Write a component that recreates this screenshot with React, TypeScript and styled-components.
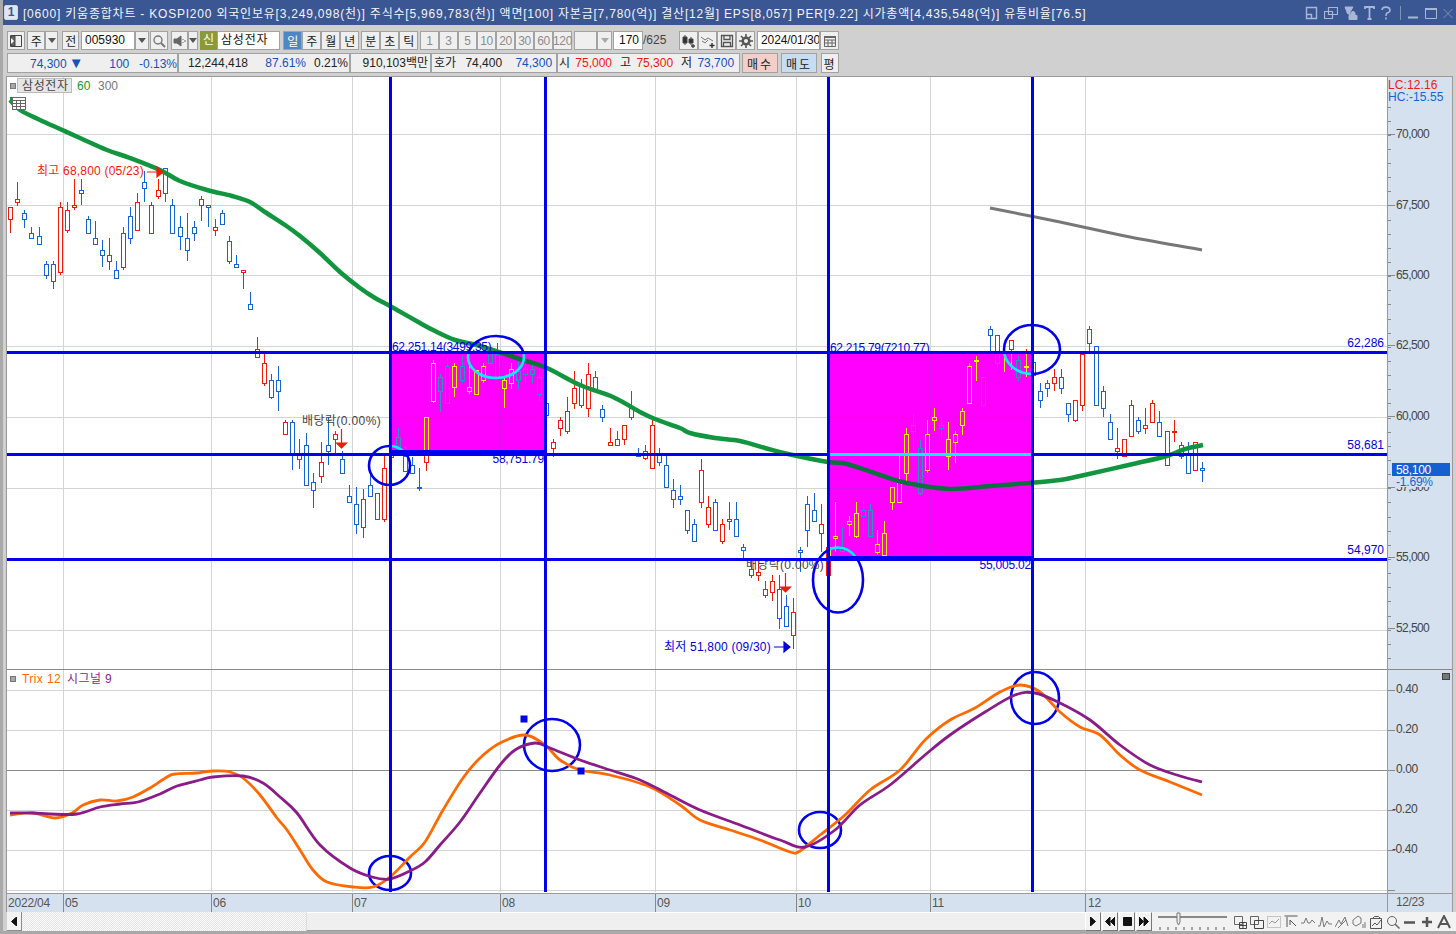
import React from "react";
import styled, { createGlobalStyle } from "styled-components";

const FONT = `"Liberation Sans", "Noto Sans CJK KR", sans-serif`;

const GlobalStyle = createGlobalStyle`
  html, body { margin: 0; padding: 0; background: #d0d0d0; overflow: hidden; }
  * { box-sizing: border-box; }
`;

// candle rows: [isRed, high, bodyTop, bodyBottom, low] in screen pixels
const candles: number[][] = [
  [1,207,207,219,233],[1,182,199,202,206],[0,210,213,219,228],[0,227,233,238,238],[0,227,236,244,244],
  [0,261,264,275,279],[0,261,264,281,289],[1,202,207,272,275],[1,202,210,230,233],[1,179,205,207,210],
  [0,179,190,193,205],[0,216,219,233,233],[0,221,238,244,244],[0,240,250,255,267],[1,238,255,261,270],
  [0,261,270,278,278],[1,227,233,267,270],[0,207,216,238,244],[1,193,202,230,230],[0,171,182,188,202],
  [1,202,205,233,233],[1,179,190,196,199],[0,168,168,193,202],[0,199,205,233,233],[0,216,227,236,250],
  [0,213,238,250,261],[0,221,227,233,241],[1,196,199,205,221],[0,205,205,207,227],[1,219,227,230,236],
  [0,210,213,224,224],[0,236,241,261,264],[0,255,264,267,267],[1,270,270,272,289],[0,292,304,309,309],
  [0,337,349,357,357],[1,352,363,383,386],[0,374,380,397,399],[0,366,380,391,411],[1,420,422,434,434],
  [0,420,422,453,470],[0,439,454,459,469],[0,433,445,485,485],[0,473,482,490,508],[1,442,462,476,483],
  [0,417,445,451,465],[1,431,434,439,453],[0,451,459,473,473],[0,485,496,502,502],[0,487,504,524,534],
  [1,489,499,527,538],[0,473,485,496,496],[0,493,493,519,519],[1,456,468,519,522],[1,451,453,457,457],
  [0,428,437,448,452],[0,446,456,471,471],[0,457,465,473,473],[0,468,487,488,491],[1,417,417,462,471],
  [1,360,363,401,403],[0,374,377,391,412],[0,357,366,403,403],[1,363,366,387,397],[0,355,366,380,383],
  [1,363,387,391,394],[1,370,370,394,394],[1,363,366,380,383],[0,350,353,363,363],[0,343,354,378,379],
  [1,378,380,388,408],[1,363,369,383,389],[0,358,371,380,389],[0,363,369,374,383],[0,363,369,374,383],
  [0,369,377,394,401],[0,395,403,415,418],[1,439,442,448,457],[1,417,420,428,436],[1,397,411,431,434],
  [1,371,388,403,409],[0,379,386,405,408],[1,363,374,408,417],[0,371,377,391,391],[0,405,409,417,422],
  [1,428,442,445,445],[0,431,439,445,445],[1,425,425,439,445],[0,391,408,417,420],[0,448,453,456,456],
  [1,445,451,458,460],[1,419,425,468,468],[0,448,454,462,466],[0,454,465,487,487],[0,479,490,499,508],
  [0,485,496,499,505],[0,510,510,530,534],[0,519,524,541,541],[1,459,470,502,508],[1,496,507,524,528],
  [0,499,502,530,530],[1,519,524,541,544],[1,502,519,521,530],[0,502,519,536,536],[0,544,547,550,559],
  [0,559,569,575,578],[1,559,572,575,581],[1,581,589,595,598],[1,575,581,592,601],[0,575,589,618,629],
  [0,595,606,626,626],[1,598,612,635,649],[0,547,550,552,572],[0,496,504,530,547],[0,493,510,521,521],
  [1,504,524,533,552],[1,547,547,575,575],[1,502,536,538,552],[0,527,547,551,552],[1,516,521,524,536],
  [1,502,513,536,538],[0,499,510,516,536],[0,504,510,536,536],[1,530,544,552,555],[1,521,533,555,555],
  [1,487,487,502,510],[1,455,482,502,502],[1,428,434,473,482],[0,414,425,431,449],[0,440,448,493,495],
  [1,420,434,470,473],[1,408,417,420,431],[0,417,425,428,437],[1,422,439,456,470],[1,431,434,442,463],
  [1,408,411,425,435],[1,363,366,403,403],[1,356,360,361,381],[0,377,377,405,405],[0,326,329,335,352],
  [0,335,335,363,369],[1,345,351,353,372],[1,340,340,349,370],[0,355,360,377,381],[1,349,366,367,377],
  [0,360,362,375,380],[0,383,391,400,408],[0,380,383,388,397],[1,369,377,383,391],[0,369,377,388,394],
  [0,403,403,414,422],[1,400,400,420,422],[1,354,354,405,411],[0,326,329,343,351],[0,346,346,405,405],
  [0,386,391,408,417],[0,414,422,439,439],[1,428,448,451,459],[1,439,439,456,456],[1,400,405,436,436],
  [0,417,420,431,434],[1,408,425,428,434],[1,400,403,422,422],[0,411,422,436,436],[1,431,431,465,465],
  [1,420,431,432,442],[0,442,445,456,459],[0,442,454,473,473],[1,442,442,470,470],[0,462,468,470,482],
];

const ma60 = "10,100 20,110 40,120 60,129 80,138 107,150 130,158 160,170 180,181 207,190 232,196 250,202 265,212 285,225 300,236 320,253 340,272 360,288 375,298 390,306 420,323 433,330 455,340 480,346 523,360 547,368 580,385 613,397 640,412 655,419 680,428 690,433 715,438 740,441 765,448 788,454 828,462 847,464 880,475 907,483 950,489 990,486 1030,483 1060,480 1080,476 1133,464 1167,456 1185,449 1203,445";
const gray = "990,208 1060,222 1130,237 1202,250";
const trix = "10,815 33,813 55,818 72,813 83,805 100,800 117,801 133,797 150,788 167,777 175,774 197,773 213,771 230,772 243,778 260,795 277,818 287,830 300,850 313,870 327,882 353,887 373,887 390,877 410,857 425,842 443,810 463,778 480,758 500,743 525,735 545,745 560,760 580,770 610,775 650,787 680,805 700,820 730,830 760,840 790,852 800,851 820,835 845,815 870,790 900,770 925,740 950,720 975,708 1000,692 1020,685 1040,692 1060,712 1080,727 1100,735 1120,755 1140,770 1170,782 1202,795";
const signal = "10,813 33,813 50,814 77,814 100,807 120,804 138,802 160,794 177,786 200,780 213,777 243,776 263,783 280,797 297,813 320,845 350,868 372,877 390,879 410,871 425,862 440,845 460,822 480,793 500,765 515,750 535,743 550,748 580,760 610,770 640,780 670,795 700,810 740,825 780,840 805,847 835,830 860,805 890,785 925,755 950,735 985,712 1015,695 1035,693 1060,703 1090,720 1120,745 1150,765 1180,776 1202,782";

// catmull-rom through the read-off points so the curves don't look like straight pieces
const smooth = (points: string) => {
  const p = points.split(" ").map((s) => s.split(",").map(Number));
  let d = `M${p[0][0]} ${p[0][1]}`;
  for (let i = 0; i < p.length - 1; i++) {
    const a = p[Math.max(i - 1, 0)];
    const b = p[i];
    const c = p[i + 1];
    const e = p[Math.min(i + 2, p.length - 1)];
    d += `C${b[0] + (c[0] - a[0]) / 6} ${b[1] + (c[1] - a[1]) / 6} ${c[0] - (e[0] - b[0]) / 6} ${c[1] - (e[1] - b[1]) / 6} ${c[0]} ${c[1]}`;
  }
  return d;
};

const gridX = [63.5, 211.5, 352.5, 500.5, 655.5, 796.5, 930.5, 1085.5];
const gridY = [134.5, 205.5, 275.5, 346.5, 417.5, 488.5, 559.5, 630.5, 690.5, 730.5, 810.5, 850.5, 890.5];
const lineX = [390.5, 545.5, 828.5, 1032.5];
const boxes = [
  { x: 390.5, y: 352.5, w: 155, h: 99 },
  { x: 828.5, y: 352.5, w: 204, h: 205 },
];
const circles = [
  [389.5, 465.5, 20.5, 19.5], [496, 357, 28, 21], [838, 580, 25, 32.5], [1032, 349.5, 28, 24.5],
  [552, 745, 28, 26], [820, 830, 21, 18], [1035, 698, 24, 26], [390, 873, 21, 17],
];
const priceTicks = [
  ["70,000", 134], ["67,500", 205], ["65,000", 275], ["62,500", 345],
  ["60,000", 416], ["57,500", 487], ["55,000", 557], ["52,500", 628],
] as const;
const trixTicks = [["0.40", 689], ["0.20", 729], ["0.00", 769], ["-0.20", 809], ["-0.40", 849]] as const;
const dates = [
  ["2022/04", 8], ["05", 65], ["06", 213], ["07", 354], ["08", 502], ["09", 657], ["10", 798], ["11", 932], ["12", 1088],
] as const;

const Window = styled.div`
  width: 1456px;
  height: 934px;
  display: flex;
  flex-direction: column;
  background: #d0d0d0;
  font: 12px ${FONT};
  color: #222;
  border-left: 3px solid #a9a9a9;
  border-bottom: 3px solid #a9a9a9;
  overflow: hidden;
`;
const TitleBar = styled.header`
  height: 25px;
  margin-left: -3px;
  padding: 0 3px 0 4px;
  display: flex;
  align-items: center;
  background: #3a5693;
  color: #f2f4fa;
`;
const WinBadge = styled.span`
  width: 14px;
  height: 15px;
  margin-right: 5px;
  border: 1px solid #cfd8ea;
  border-radius: 2px;
  background: #dfe6f3;
  color: #3a5693;
  font-weight: bold;
  text-align: center;
  line-height: 13px;
`;
const TitleText = styled.span`
  flex: 1;
  letter-spacing: 0.79px;
  white-space: nowrap;
`;
const TitleIcons = styled.div`
  display: flex;
  align-items: center;
  gap: 6px;
`;
const TitleSep = styled.span`
  width: 1px;
  height: 14px;
  margin-left: 3px;
  background: #7e92ba;
`;
const ToolRow = styled.div`
  height: 19px;
  margin: 6px 0 0 4px;
  display: flex;
`;
const InfoRow = styled(ToolRow)`
  margin-top: 3px;
  height: 20px;
`;
const Group = styled.div<{ $ml?: number }>`
  display: flex;
  margin-left: ${(p) => p.$ml ?? 0}px;
`;
const ToolBtn = styled.button<{ $w?: number; $on?: boolean; $dim?: boolean }>`
  width: ${(p) => p.$w ?? 19}px;
  height: 19px;
  padding: 0;
  display: flex;
  align-items: center;
  justify-content: center;
  border: 1px solid #a2a2a2;
  background: ${(p) => (p.$on ? "#4f86c6" : "#efefef")};
  color: ${(p) => (p.$on ? "#fff" : p.$dim ? "#8c8c8c" : "#222")};
  font: 12px ${FONT};
  letter-spacing: -0.4px;
  white-space: nowrap;
`;
const Arrow = styled.i<{ $dim?: boolean }>`
  width: 0;
  height: 0;
  border: 4px solid transparent;
  border-top: 5px solid ${(p) => (p.$dim ? "#a8a8a8" : "#555")};
  border-bottom: 0;
`;
const Field = styled.div<{ $w: number; $align?: string; $ls?: number }>`
  width: ${(p) => p.$w}px;
  height: 19px;
  padding: 0 3px;
  border: 1px solid #a2a2a2;
  background: #fff;
  color: #111;
  line-height: 17px;
  letter-spacing: ${(p) => p.$ls ?? 0}px;
  text-align: ${(p) => p.$align ?? "left"};
  white-space: nowrap;
  overflow: hidden;
`;
const Badge = styled.span`
  width: 17px;
  height: 19px;
  background: #8a9a3b;
  color: #fff;
  text-align: center;
  line-height: 19px;
`;
const Total = styled.span`
  width: 25px;
  line-height: 19px;
  color: #444;
`;
const InfoCell = styled.div<{ $w: number }>`
  width: ${(p) => p.$w}px;
  height: 20px;
  border: 1px solid #a2a2a2;
  background: #efefef;
  display: flex;
  align-items: baseline;
  line-height: 18px;
  white-space: nowrap;
`;
const InfoText = styled.span<{ $w?: number; $c?: string; $ml?: number; $size?: number }>`
  width: ${(p) => (p.$w ? `${p.$w}px` : "auto")};
  margin-left: ${(p) => p.$ml ?? 0}px;
  color: ${(p) => p.$c ?? "#222"};
  font-size: ${(p) => p.$size ?? 12}px;
  text-align: right;
`;
const TradeBtn = styled.button<{ $bg: string; $ml?: number; $w?: number }>`
  width: ${(p) => p.$w ?? 36}px;
  height: 20px;
  margin-left: ${(p) => p.$ml ?? 0}px;
  padding: 0;
  border: 1px solid #a2a2a2;
  background: ${(p) => p.$bg};
  color: #222;
  font: 12px ${FONT};
  letter-spacing: 2px;
`;
const ChartFrame = styled.main`
  margin: 3px 0 0 3px;
  width: 1447px;
  display: grid;
  grid-template-columns: 1380px 1fr;
  grid-template-rows: 816px 19px;
  border: 1px solid #9a9a9a;
  border-bottom: 0;
  background: #d5e1ef;
`;
const Plot = styled.svg`
  display: block;
  width: 1380px;
  height: 816px;
  background: #fff;
`;
const AxisSvg = styled.svg`
  display: block;
  width: 65px;
  height: 816px;
  border-left: 1px solid #9a9a9a;
`;
const DateAxis = styled.svg`
  display: block;
  width: 1380px;
  height: 19px;
  border-top: 1px solid #9a9a9a;
`;
const CornerDate = styled.div`
  height: 19px;
  border-top: 1px solid #9a9a9a;
  border-left: 1px solid #9a9a9a;
  padding-left: 8px;
  line-height: 17px;
  color: #555;
  letter-spacing: -0.4px;
`;
const ChartText = styled.text<{ $fill: string; $ls?: number }>`
  font: 12px ${FONT};
  fill: ${(p) => p.$fill};
  letter-spacing: ${(p) => p.$ls ?? 0}px;
`;
const ScrollRow = styled.footer`
  height: 19px;
  margin-left: 4px;
  display: flex;
  align-items: stretch;
  background: #f2f2f2;
  & > * { flex-shrink: 0; }
`;
const ScrollBtn = styled.button`
  width: 15px;
  padding: 0;
  border: 0;
  border-right: 1px solid #8c8c8c;
  border-bottom: 1px solid #8c8c8c;
  background: #f2f2f2;
  display: flex;
  align-items: center;
  justify-content: center;
`;
const ScrollTrack = styled.div`
  width: 284px;
  background: repeating-conic-gradient(#e4e4e4 0 25%, #fbfbfb 0 50%) 0 0 / 2px 2px;
`;
const ScrollThumb = styled.div`
  width: 779px;
  background: #efefef;
  border-top: 1px solid #fff;
  border-bottom: 1px solid #9a9a9a;
  border-left: 1px solid #ddd;
`;
const PlayGroup = styled.div`
  display: flex;
  gap: 1px;
`;
const PlayBtn = styled.button`
  width: 16px;
  padding: 0;
  border: 1px solid #fff;
  border-right-color: #777;
  border-bottom-color: #777;
  background: #f2f2f2;
  display: flex;
  align-items: center;
  justify-content: center;
`;
const Slider = styled.svg`
  width: 72px;
  margin-left: 5px;
`;
const ViewTools = styled.div`
  display: flex;
  align-items: center;
  gap: 3px;
  margin-left: 4px;
`;

const Ico = ({ w = 14, h = 14, c = "#666", children }: { w?: number; h?: number; c?: string; children: React.ReactNode }) => (
  <svg width={w} height={h} viewBox={`0 0 ${w} ${h}`} fill="none" stroke={c} strokeWidth="1">
    {children}
  </svg>
);

const TitleIconSet = () => (
  <TitleIcons>
    <Ico w={13} h={14} c="#a8b7d6"><path d="M1.500 1.500h10v11h-10zM1.500 8.500h5v4" strokeWidth="1.400" /></Ico>
    <Ico w={14} h={14} c="#a8b7d6"><path d="M4.500 1.500h9v7h-9zM.5 5.500h8v7h-8z" strokeWidth="1.200" /></Ico>
    <Ico w={14} h={14} c="#a8b7d6"><path d="M1 1h8L6 6v3L3 7V6zM5 9.500h8v4H5zM7 9V7.500a2 2 0 0 1 4 0V9" fill="#a8b7d6" /></Ico>
    <Ico w={11} h={14} c="#a8b7d6"><path d="M1 3V1h9v2M5.500 1v12M3.500 13h4" strokeWidth="1.800" /></Ico>
    <Ico w={10} h={14} c="#a8b7d6"><path d="M1 4a4 3 0 1 1 5 3c-1 .7-1 1.500-1 3M5 11.500v2" strokeWidth="1.600" /></Ico>
    <TitleSep />
    <Ico w={12} h={14} c="#a8b7d6"><path d="M1 11.500h10" strokeWidth="2" /></Ico>
    <Ico w={12} h={14} c="#a8b7d6"><path d="M.5 3.500h11v9H.5z" /><path d="M0 3h12" strokeWidth="2" /></Ico>
    <Ico w={10} h={14} c="#7e92ba"><path d="M.5 3l9 9M9.500 3l-9 9" /></Ico>
  </TitleIcons>
);

const toolGlyphs = {
  layout: <Ico c="#444"><path d="M1.500 1.500h11v11h-11z" /><path d="M2 2h4v10H2z" fill="#666" /><path d="M5 7L2 10V4z" fill="#fff" stroke="none" /></Ico>,
  search: <Ico c="#777"><circle cx="6" cy="6" r="4" strokeWidth="1.400" /><path d="M9 9l4 4" strokeWidth="2" /></Ico>,
  sound: <Ico w={14} c="#666"><path d="M1 5h3l4-3v10L4 9H1z" fill="#666" /><path d="M10 5v1M10 8v1M12 6v2" /></Ico>,
  candle: <Ico c="#444"><path d="M3 1v10M9 3v8" /><path d="M1 3h4v6H1zM7 5h4v4H7z" fill="#333" /><path d="M11 10v4M9 12h4" strokeWidth="1.400" /></Ico>,
  line: <Ico c="#777"><path d="M0 3l4 3 3-2 5 3M1 7l3 2 3-3" /><path d="M11 9v5M8.500 11.500h5" stroke="#333" strokeWidth="1.400" /></Ico>,
  save: <Ico c="#555"><path d="M1.500 1.500h11v11h-11zM4 1.500v4h6v-4M3.500 12.500v-4h7v4" strokeWidth="1.300" /></Ico>,
  gear: <Ico c="#555"><circle cx="7" cy="7" r="3.300" strokeWidth="2.500" /><path d="M7 0v3M7 11v3M0 7h3M11 7h3M2 2l2 2M10 10l2 2M12 2l-2 2M4 10l-2 2" strokeWidth="1.600" /></Ico>,
  calendar: <Ico c="#666"><path d="M1.500 2.500h11v10h-11zM1.500 6h11M1.500 9h11M5 6v6.500M9 6v6.500" /><path d="M1 3h12" strokeWidth="2" /></Ico>,
};

const Toolbar = () => (
  <ToolRow>
    <ToolBtn $w={18}>{toolGlyphs.layout}</ToolBtn>
    <Group $ml={2}><ToolBtn $w={18}>주</ToolBtn><ToolBtn $w={13}><Arrow /></ToolBtn></Group>
    <Group $ml={4}><ToolBtn $w={17}>전</ToolBtn></Group>
    <Group $ml={2}>
      <Field $w={54}>005930</Field>
      <ToolBtn $w={14}><Arrow /></ToolBtn>
    </Group>
    <Group $ml={1}><ToolBtn $w={18}>{toolGlyphs.search}</ToolBtn></Group>
    <Group $ml={3}><ToolBtn $w={17}>{toolGlyphs.sound}</ToolBtn><ToolBtn $w={10}><Arrow /></ToolBtn></Group>
    <Group $ml={2}>
      <Badge>신</Badge>
      <Field $w={63} $ls={0.8}>삼성전자</Field>
    </Group>
    <Group $ml={3}>
      <ToolBtn $on>일</ToolBtn><ToolBtn>주</ToolBtn><ToolBtn>월</ToolBtn><ToolBtn>년</ToolBtn>
    </Group>
    <Group $ml={2}><ToolBtn>분</ToolBtn><ToolBtn>초</ToolBtn><ToolBtn>틱</ToolBtn></Group>
    <Group $ml={2}>
      {["1", "3", "5", "10", "20", "30", "60", "120"].map((n) => <ToolBtn key={n} $dim>{n}</ToolBtn>)}
    </Group>
    <Group $ml={2}><ToolBtn $w={23} /><ToolBtn $w={15}><Arrow $dim /></ToolBtn></Group>
    <Group $ml={1}><Field $w={30} $align="right">170</Field><Total>/625</Total></Group>
    <Group $ml={11}>
      <ToolBtn>{toolGlyphs.candle}</ToolBtn><ToolBtn>{toolGlyphs.line}</ToolBtn>
      <ToolBtn>{toolGlyphs.save}</ToolBtn><ToolBtn>{toolGlyphs.gear}</ToolBtn>
    </Group>
    <Group $ml={2}><Field $w={63} $ls={-0.1}>2024/01/30</Field><ToolBtn $w={19}>{toolGlyphs.calendar}</ToolBtn></Group>
  </ToolRow>
);

const BLUE = "#1450c0";
const RED = "#f01a0a";

const InfoBar = () => (
  <InfoRow>
    <InfoCell $w={171}>
      <InfoText $w={59} $c={BLUE}>74,300</InfoText>
      <InfoText $ml={2} $c={BLUE} $size={15}>▼</InfoText>
      <InfoText $w={46} $c={BLUE}>100</InfoText>
      <InfoText $w={48} $c={BLUE}>-0.13%</InfoText>
    </InfoCell>
    <InfoCell $w={172}>
      <InfoText $w={69}>12,244,418</InfoText>
      <InfoText $w={58} $c={BLUE}>87.61%</InfoText>
      <InfoText $w={42}>0.21%</InfoText>
    </InfoCell>
    <InfoCell $w={81}><InfoText $w={77}>910,103백만</InfoText></InfoCell>
    <InfoCell $w={126}>
      <InfoText $ml={2}>호가</InfoText>
      <InfoText $w={46}>74,400</InfoText>
      <InfoText $w={50} $c={BLUE}>74,300</InfoText>
    </InfoCell>
    <InfoCell $w={183}>
      <InfoText $ml={1}>시</InfoText>
      <InfoText $w={42} $c={RED}>75,000</InfoText>
      <InfoText $ml={8}>고</InfoText>
      <InfoText $w={42} $c={RED}>75,300</InfoText>
      <InfoText $ml={8}>저</InfoText>
      <InfoText $w={42} $c={BLUE}>73,700</InfoText>
    </InfoCell>
    <TradeBtn $bg="#f4cfc8" $ml={2}>매수</TradeBtn>
    <TradeBtn $bg="#c6ddf3" $ml={3}>매도</TradeBtn>
    <TradeBtn $bg="#efefef" $ml={4} $w={18}>평</TradeBtn>
  </InfoRow>
);

const Candles = ({ up, down, fill }: { up: string; down: string; fill: string }) => (
  <g shapeRendering="crispEdges">
    {candles.map(([red, hi, top, bot, lo], i) => {
      const x = Math.round(10.3 + 7.05 * i) + 0.5;
      const c = red ? up : down;
      return (
        <g key={i} stroke={c} strokeWidth="1">
          <path d={`M${x} ${hi}V${lo}`} />
          <rect x={x - 2} y={top + 0.5} width={4} height={Math.max(bot - top, 1)} fill={fill} />
        </g>
      );
    })}
  </g>
);

const Circles = ({ c }: { c: string }) => (
  <g fill="none" stroke={c} strokeWidth="2.600">
    {circles.map(([cx, cy, rx, ry]) => <ellipse key={`${cx}-${cy}`} cx={cx} cy={cy} rx={rx} ry={ry} />)}
  </g>
);

const Pointer = ({ x, y, dir, c }: { x: number; y: number; dir: "right" | "down"; c: string }) =>
  dir === "down" ? (
    <path d={`M${x} ${y - 14}V${y}M${x - 5} ${y}h10l-5 5z`} stroke={c} strokeWidth="1.200" fill={c} />
  ) : (
    <path d={`M${x - 16} ${y}H${x - 6}M${x - 6} ${y - 5}v10l6 -5z`} stroke={c} strokeWidth="1.200" fill={c} />
  );

const ChartPlot = () => (
  <Plot viewBox="7 77 1380 816">
    <defs>
      <clipPath id="pinkBoxes">
        {boxes.map((b) => <rect key={b.x} x={b.x} y={b.y} width={b.w} height={b.h} />)}
      </clipPath>
    </defs>
    <g stroke="#d4d4d4" shapeRendering="crispEdges">
      {gridX.map((x) => <path key={x} d={`M${x} 77V892`} />)}
      {gridY.map((y) => <path key={y} d={`M7 ${y}H1387`} />)}
    </g>
    <path d="M7 770.500H1387M7 669.500H1387" stroke="#8a8a8a" shapeRendering="crispEdges" />

    <Candles up={RED} down="#1464d2" fill="#fff" />
    <path d={smooth(gray)} fill="none" stroke="#777" strokeWidth="3" />
    <path d={smooth(ma60)} fill="none" stroke="#12953f" strokeWidth="4.500" />
    <Circles c="#0000ee" />

    <path d={smooth(trix)} fill="none" stroke="#ff6a00" strokeWidth="2.800" />
    <path d={smooth(signal)} fill="none" stroke="#8a1c88" strokeWidth="2.800" />

    <rect x="10.500" y="83.500" width="5" height="5" fill="#a8a8a8" stroke="#777" />
    <rect x="17.500" y="78.500" width="54" height="14" fill="#e6e6e6" stroke="#bbb" />
    <ChartText x="22" y="90" $fill="#444" $ls={0.6}>삼성전자</ChartText>
    <ChartText x="77" y="90" $fill="#0b9a2c">60</ChartText>
    <ChartText x="98" y="90" $fill="#777">300</ChartText>
    <rect x="10" y="97" width="2" height="5" fill="#12953f" />
    <path d="M12.500 97.500h13v12h-13zM12.500 100.500h13M12.500 103.500h13M12.500 106.500h13M16.500 100.500v9M20.500 100.500v9" fill="#fff" stroke="#666" shapeRendering="crispEdges" />

    <ChartText x="37" y="175" $fill={RED} $ls={0.2}>최고 68,800 (05/23)</ChartText>
    <Pointer x={163} y={172} dir="right" c={RED} />
    <ChartText x="302" y="425" $fill="#444" $ls={0.4}>배당락(0.00%)</ChartText>
    <Pointer x={341.500} y={443} dir="down" c={RED} />
    <ChartText x="746" y="569" $fill="#444" $ls={0.3}>배당락(0.00%)</ChartText>
    <Pointer x={785.500} y={587} dir="down" c={RED} />
    <ChartText x="664" y="651" $fill="#0000d8" $ls={0.2}>최저 51,800 (09/30)</ChartText>
    <Pointer x={790} y={647} dir="right" c="#0000d8" />

    <ChartText x="392" y="351" $fill="#0000d8" $ls={-0.3}>62,251.14(3499.35)</ChartText>
    <ChartText x="830" y="352" $fill="#0000d8" $ls={-0.3}>62,215.79(7210.77)</ChartText>
    <ChartText x="544" y="463" textAnchor="end" $fill="#0000d8" $ls={-0.2}>58,751.79</ChartText>
    <ChartText x="1031" y="569" textAnchor="end" $fill="#0000d8" $ls={-0.2}>55,005.02</ChartText>
    <ChartText x="1384" y="347" textAnchor="end" $fill="#0000d8">62,286</ChartText>
    <ChartText x="1384" y="449" textAnchor="end" $fill="#0000d8">58,681</ChartText>
    <ChartText x="1384" y="554" textAnchor="end" $fill="#0000d8">54,970</ChartText>

    <rect x="10.500" y="676.500" width="5" height="5" fill="#a8a8a8" stroke="#777" />
    <ChartText x="22" y="683" $fill="#ff6a00" $ls={0.4}>Trix 12</ChartText>
    <ChartText x="67" y="683" $fill="#8a1c88" $ls={0.4}>시그널 9</ChartText>

    <g clipPath="url(#pinkBoxes)">
      {boxes.map((b) => <rect key={b.x} x={b.x} y={b.y} width={b.w} height={b.h} fill="#ff00ff" />)}
      <g stroke="#e010e8" shapeRendering="crispEdges">
        {gridX.map((x) => <path key={x} d={`M${x} 340V570`} />)}
        {gridY.map((y) => <path key={y} d={`M380 ${y}H1040`} />)}
      </g>
      <Candles up="#f0f000" down="#1e9cc0" fill="#ff00ff" />
      <path d={smooth(ma60)} fill="none" stroke="#0d6f3d" strokeWidth="4.500" />
      <Circles c="#00f0ff" />
      <path d="M830 454.500H1032" stroke="#00f0ff" strokeWidth="3" shapeRendering="crispEdges" />
    </g>

    <g fill="none" stroke="#0000ee" strokeWidth="3" shapeRendering="crispEdges">
      {boxes.map((b) => <rect key={b.x} x={b.x} y={b.y} width={b.w} height={b.h} />)}
      {lineX.map((x) => <path key={x} d={`M${x} 77V892`} />)}
      <path d="M7 352.500H1387M7 454.500H830M1032 454.500H1387M7 559.500H1387" />
    </g>
    <rect x="520.500" y="715.500" width="7" height="7" fill="#0000ee" />
    <rect x="577.500" y="767.500" width="7" height="7" fill="#0000ee" />
  </Plot>
);

const PriceAxis = () => (
  <AxisSvg viewBox="1388 77 64 816">
    <g stroke="#888" shapeRendering="crispEdges">
      {Array.from({ length: 48 }, (_, i) => {
        const y = 106.500 + i * 14.14;
        return y < 660 ? <path key={i} d={`M1388 ${Math.round(y) + 0.5}h3`} /> : null;
      })}
      {priceTicks.map(([, y]) => <path key={y} d={`M1388 ${y + 0.5}h7`} />)}
      {trixTicks.map(([, y]) => <path key={y} d={`M1388 ${y + 1.5}h7`} />)}
      <path d="M1388 669.500h65M1388 890.500h7" />
    </g>
    <ChartText x="1388" y="89" $fill={RED} $ls={0.1}>LC:12.16</ChartText>
    <ChartText x="1388" y="101" $fill="#1464d2" $ls={0.1}>HC:-15.55</ChartText>
    {priceTicks.map(([t, y]) => <ChartText key={t} x="1396" y={y + 4} $ls={-0.6} $fill="#444">{t}</ChartText>)}
    {trixTicks.map(([t, y]) => <ChartText key={t} x={t.startsWith("-") ? 1392 : 1396} y={y + 4} $ls={-0.4} $fill="#444">{t}</ChartText>)}
    <rect x="1392" y="463" width="58" height="13" fill="#1560d0" />
    <rect x="1392" y="476" width="58" height="11" fill="#d5e1ef" />
    <ChartText x="1396" y="474" $fill="#fff" $ls={-0.3}>58,100</ChartText>
    <ChartText x="1396" y="486" $fill="#1464d2" $ls={-0.2}>-1.69%</ChartText>
    <rect x="1442.500" y="673.500" width="7" height="6" fill="#777" stroke="#444" />
  </AxisSvg>
);

const BottomBar = () => (
  <ScrollRow>
    <ScrollBtn><Ico w={6} h={9} c="#111"><path d="M5.500 0v9L.5 4.500z" fill="#111" /></Ico></ScrollBtn>
    <ScrollTrack />
    <ScrollThumb />
    <PlayGroup>
      <PlayBtn><Ico w={6} h={9} c="#111"><path d="M.5 0v9l5-4.500z" fill="#111" /></Ico></PlayBtn>
      <PlayBtn><Ico w={10} h={9} c="#111"><path d="M5 0v9L.5 4.500zM10 0v9L5.500 4.500z" fill="#111" /></Ico></PlayBtn>
      <PlayBtn><Ico w={9} h={9} c="#111"><path d="M.5.5h8v8h-8z" fill="#111" /></Ico></PlayBtn>
      <PlayBtn><Ico w={10} h={9} c="#111"><path d="M0 0v9l4.500-4.500zM5 0v9l4.500-4.500z" fill="#111" /></Ico></PlayBtn>
    </PlayGroup>
    <Slider viewBox="0 0 72 19">
      <path d="M1 5h69" stroke="#888" strokeWidth="2" />
      <path d="M20 1h3v9l-1.500 3L20 10z" fill="#eee" stroke="#777" />
      <path d="M3 15v3M11 15v3M19 15v3M27 15v3M35 15v3M43 15v3M51 15v3M59 15v3M67 15v3" stroke="#555" />
    </Slider>
    <ViewTools>
      <Ico><path d="M1.500 1.500h8v8h-8z" /><path d="M6.500 7.500h7v6h-7zM10 7.500v6M6.500 10.500h7" stroke="#444" /></Ico>
      <Ico><path d="M.5 1.500h8v8h-8z" /><path d="M4.500 5.500h9v8h-9z" stroke="#444" /></Ico>
      <Ico c="#999"><path d="M.5 1.500h13v11H.5z" strokeDasharray="1 1" /><path d="M2 9l3-3 3 2 4-4" /></Ico>
      <Ico c="#555"><path d="M.5 1h13M3 2v10M6 5v5M6 5l6 6" /></Ico>
      <Ico c="#777"><path d="M0 8h3l2-5 2 5h2l2-3 3 3" /></Ico>
      <Ico c="#777"><path d="M0 11h2l2-9 2 10 3-6 2 3h3" /></Ico>
      <Ico c="#777"><path d="M0 12l4-7 2 4 4-7 3 9M3 13l8-8" /></Ico>
      <Ico c="#777"><path d="M1 5l5-4 3 2v5l-5 3-3-2zM11 9v4M13 7v6" /></Ico>
      <Ico c="#555"><path d="M1.500 3.500h11v10h-11zM3 11l3-3 2 2 4-5M3.500 3.500l2-2h4l2 2" /></Ico>
      <Ico c="#666"><circle cx="6" cy="6" r="4.500" /><path d="M9 9l4.500 4.500" strokeWidth="1.500" /></Ico>
      <Ico c="#555"><path d="M1 7.500h11" strokeWidth="2.500" /></Ico>
      <Ico c="#555"><path d="M2 7h10M7 2v10" strokeWidth="2.500" /></Ico>
      <Ico c="#555"><path d="M1 13L7 1l6 12M3.500 9h7" strokeWidth="2" /></Ico>
    </ViewTools>
  </ScrollRow>
);

export default function App() {
  return (
    <Window>
      <GlobalStyle />
      <TitleBar>
        <WinBadge>1</WinBadge>
        <TitleText>
          [0600] 키움종합차트 - KOSPI200 외국인보유[3,249,098(천)] 주식수[5,969,783(천)] 액면[100] 자본금[7,780(억)] 결산[12월] EPS[8,057] PER[9.22] 시가총액[4,435,548(억)] 유통비율[76.5]
        </TitleText>
        <TitleIconSet />
      </TitleBar>
      <Toolbar />
      <InfoBar />
      <ChartFrame>
        <ChartPlot />
        <PriceAxis />
        <DateAxis viewBox="7 0 1380 18">
          <g stroke="#888" shapeRendering="crispEdges">
            {gridX.map((x) => <path key={x} d={`M${x} 0V18`} />)}
          </g>
          {dates.map(([t, x]) => <ChartText key={t} x={x} y="13" $ls={-0.2} $fill="#555">{t}</ChartText>)}
        </DateAxis>
        <CornerDate>12/23</CornerDate>
      </ChartFrame>
      <BottomBar />
    </Window>
  );
}
